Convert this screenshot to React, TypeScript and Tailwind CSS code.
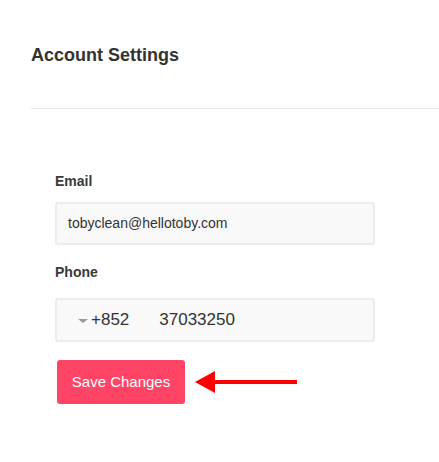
export default function App() {
  return (
    <div className="min-h-screen bg-white font-['Liberation_Sans',Arial,sans-serif] text-[#333]">
      {/* Header */}
      <div className="pl-[31px] pt-[43px]">
        <h1 className="text-[18px] leading-[24px] font-bold text-[#333]">Account Settings</h1>
        <div className="mt-[41px] h-px bg-[#e9e9e9]" />
      </div>

      {/* Form */}
      <form className="pl-[55px] pt-[62px]" onSubmit={(e) => e.preventDefault()}>
        <label className="block text-[14px] leading-[20px] font-bold text-[#3a3a3a]">Email</label>
        <div className="mt-[11px] flex h-[43px] w-[320px] items-center rounded-[3px] border-2 border-[#ececec] bg-[#f9f9f9] pl-[11px] text-[14px] text-[#333]">
          tobyclean@hellotoby.com
        </div>

        <label className="mt-[17px] block text-[14px] leading-[20px] font-bold text-[#3a3a3a]">Phone</label>
        <div className="mt-[16px] flex h-[44px] w-[320px] items-center rounded-[3px] border-2 border-[#ececec] bg-[#f9f9f9] pl-[21px] text-[17px] text-[#333]">
          <svg width="10" height="4" viewBox="0 0 10 4" className="mr-[3px] mt-[2px]">
            <polygon points="0,0 10,0 5,4" fill="#999" />
          </svg>
          <span>+852</span>
          <span className="ml-[30px]">37033250</span>
        </div>

        <div className="mt-[18px] flex items-center">
          <button
            type="submit"
            className="ml-[2px] h-[44px] w-[128px] rounded-[3px] bg-[#ff4466] text-[15px] text-white"
          >
            Save Changes
          </button>
          <svg width="102" height="22" viewBox="0 0 102 22" className="ml-[10px]">
            <polygon points="0,11 20,0 20,22" fill="#ff0000" />
            <rect x="18" y="9" width="84" height="4" fill="#ff0000" />
          </svg>
        </div>
      </form>
    </div>
  );
}
